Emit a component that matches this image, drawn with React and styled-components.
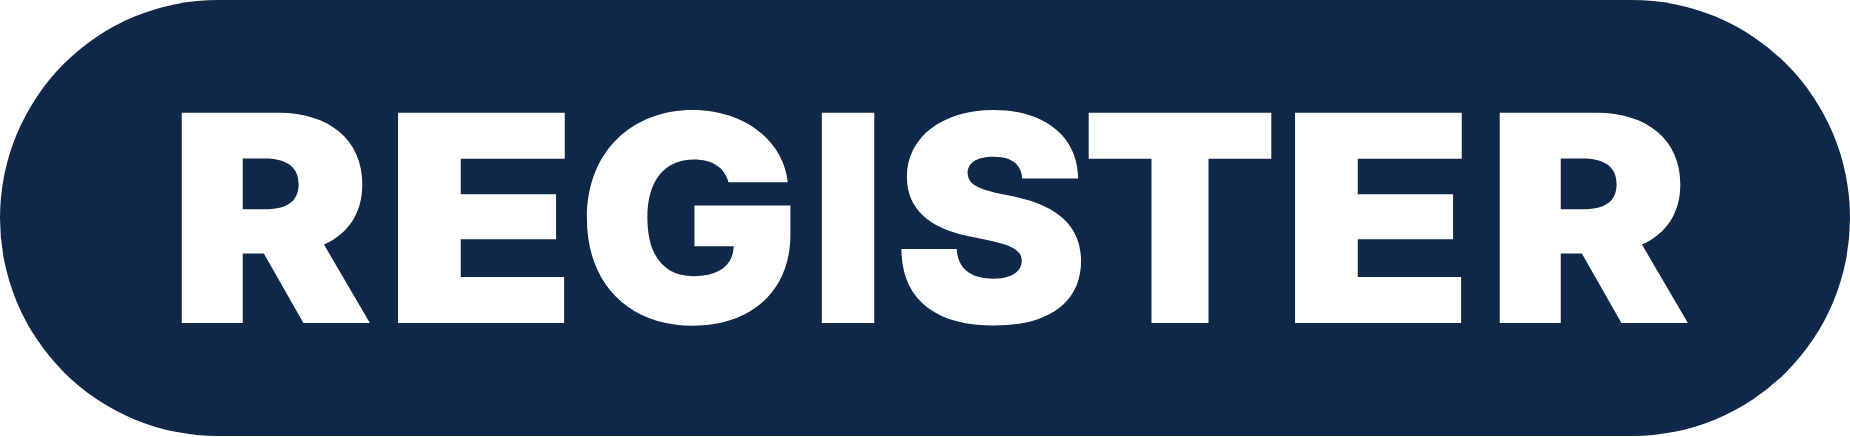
import React from "react";
import styled, { createGlobalStyle } from "styled-components";

const Global = createGlobalStyle`
  html, body { margin: 0; padding: 0; background: #ffffff; }
  body { width: 1850px; height: 437px; overflow: hidden; }
`;

const Pill = styled.a`
  display: flex;
  align-items: center;
  box-sizing: border-box;
  width: 1850px;
  height: 436px;
  padding-left: 180px;
  border-radius: 218px;
  background: #0f2849;
  text-decoration: none;
  cursor: pointer;
`;

const Word = styled.span`
  display: flex;
  align-items: center;
  height: 210px;
`;

const Letter = styled.span`
  display: flex;
  justify-content: center;
  align-items: center;
  flex: none;
  width: ${(p) => p.$w}px;
  height: 210px;
  margin-left: ${(p) => p.$gap || 0}px;
`;

const Glyph = styled.span`
  display: block;
  font-family: Inter, "Liberation Sans", sans-serif;
  font-weight: 900;
  font-size: 289px;
  line-height: 210px;
  color: #ffffff;
  transform: translateX(${(p) => p.$dx || 0}px) scaleX(${(p) => p.$sx || 1});
`;

const letters = [
  { c: "R", w: 187, gap: 0, sx: 1.07, dx: -3 },
  { c: "E", w: 168, gap: 30, sx: 1.1, dx: 0 },
  { c: "G", w: 200, gap: 20, sx: 1.03, dx: 4 },
  { c: "I", w: 53, gap: 37, sx: 0.92, dx: 0 },
  { c: "S", w: 180, gap: 26, sx: 1.02, dx: 0 },
  { c: "T", w: 180, gap: 9, sx: 1.0, dx: 0 },
  { c: "E", w: 168, gap: 24, sx: 1.1, dx: 0 },
  { c: "R", w: 187, gap: 34, sx: 1.07, dx: -1 },
];

export default function App() {
  return (
    <>
      <Global />
      <Pill href="#" aria-label="REGISTER">
        <Word>
          {letters.map((l, i) => (
            <Letter key={i} $w={l.w} $gap={l.gap}>
              <Glyph $sx={l.sx} $dx={l.dx}>{l.c}</Glyph>
            </Letter>
          ))}
        </Word>
      </Pill>
    </>
  );
}
